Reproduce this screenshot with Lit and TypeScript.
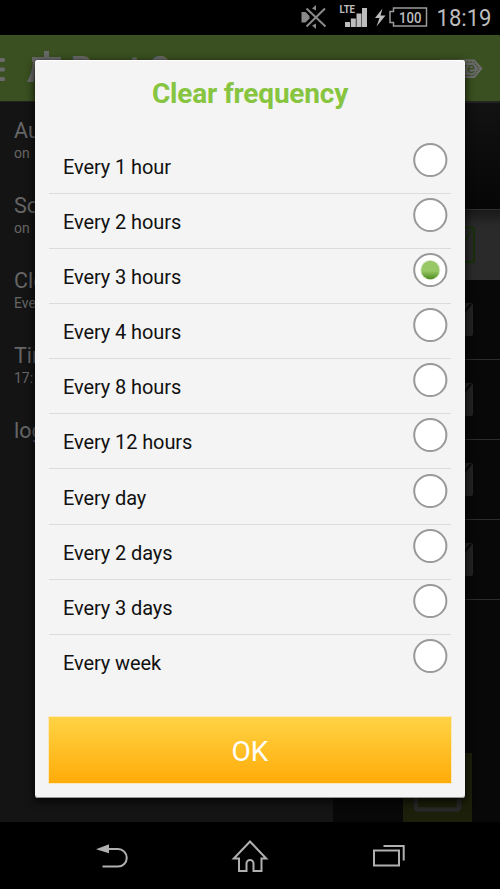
import { LitElement, html, css, svg } from "lit";
import { customElement, property } from "lit/decorators.js";

@customElement("status-bar")
class StatusBar extends LitElement {
  static styles = css`
    :host { display: block; height: 35px; background: #000; }
    svg { display: block; }
    text { font-family: Roboto, sans-serif; fill: #bdbdbd; }
  `;
  render() {
    return html`<svg width="500" height="35" viewBox="0 0 500 35">
      <g fill="#8a8a8a" stroke="none">
        <path d="M301.5 12h4l4 4v2.500l-4 4h-4z" />
        <path d="M312 8.500l4-3.500v5.500zM312 25.500l4 3.500v-5.500z" />
      </g>
      <path d="M306.500 8.500L325.500 26.500M325 8.500L306.500 26.500" stroke="#8a8a8a" stroke-width="2" fill="none" />
      <text x="339.500" y="12.800" font-size="10.500" font-weight="700" textLength="15.500" lengthAdjust="spacingAndGlyphs">LTE</text>
      <path fill="#bdbdbd" d="M345 22h5v5h-5zM350.800 18.500h5V27h-5zM356.500 13.500h5V27h-5zM362 8h5v19h-5z" />
      <path fill="#bdbdbd" d="M382.500 8.500L375 18h4.500L376.500 26.500L385.500 15.500h-5z" />
      <path fill="none" stroke="#9a9a9a" stroke-width="1.500" d="M393.500 8h33v18h-33v-3.500h-3.500v-11h3.500z" />
      <text x="399" y="22.800" font-size="15.500" font-weight="500" textLength="22.500" lengthAdjust="spacingAndGlyphs">100</text>
      <text x="436.500" y="26" font-size="23.500" textLength="55" lengthAdjust="spacingAndGlyphs">18:19</text>
    </svg>`;
  }
}

@customElement("action-bar")
class ActionBar extends LitElement {
  static styles = css`
    :host { display: block; height: 66px; background: #3a5020; }
    svg { display: block; }
    text { font-family: Roboto, sans-serif; }
  `;
  render() {
    return html`<svg width="500" height="66" viewBox="0 35 500 66">
      <g fill="#696969">
        <rect x="-3" y="58" width="8" height="4" rx="1.500" />
        <rect x="-3" y="67.500" width="8" height="4" rx="1.500" />
        <rect x="-3" y="77" width="8" height="4" rx="1.500" />
        <path d="M44 51h5v6h12v5H35q0 14-1 20h-7q5-9 6-20h-1v-5h12z" />
        <text x="71" y="80" font-size="33" font-weight="700">Root C</text>
      </g>
      <path d="M440 60h34.500l7.500 8.500l-7.500 9H440z" fill="#696969" stroke="#707070" />
      <path d="M440 62h33.500l5.500 6.500l-5.500 7H440z" fill="none" stroke="#3a5020" stroke-dasharray="2 1" />
      <text x="475" y="73" font-size="15" fill="#3a5020" text-anchor="end">re</text>
    </svg>`;
  }
}

@customElement("settings-drawer")
class SettingsDrawer extends LitElement {
  static styles = css`
    :host { display: block; width: 333px; box-sizing: border-box; padding: 17px 0 0 14px; background: #141414; color: #666; font-family: Roboto, sans-serif; overflow: hidden; border-top: 1px solid #222; }
    .entry { height: 75px; }
    .name { font-size: 21.500px; line-height: 24px; }
    .value { font-size: 14px; line-height: 18px; padding-top: 1px; }
  `;
  items = [["Au", "on"], ["So", "on"], ["Cle", "Eve"], ["Tim", "17:"], ["log", ""]];
  render() {
    return this.items.map(([n, v]) => html`<div class="entry"><div class="name">${n}</div><div class="value">${v}</div></div>`);
  }
}

@customElement("task-panel")
class TaskPanel extends LitElement {
  static styles = css`
    :host { display: flex; flex-direction: column; flex: 1; background: #080808; }
    .summary { height: 108px; box-sizing: border-box; border-top: 2px solid #242424; background: linear-gradient(#121212, #060606); }
    .row { height: 80px; box-sizing: border-box; display: flex; align-items: center; justify-content: flex-end; padding: 0 27px 0 0; border-bottom: 1px solid #2c2c2c; }
    .row.active { height: 71px; border: 0; border-top: 1px solid #303030; background: linear-gradient(#191919, #2a2a2a 16px); padding-right: 24px; }
    .foot { flex: 1; display: flex; align-items: flex-end; justify-content: flex-end; padding-right: 28px; }
    .action { width: 69px; height: 69px; background: #1c1f0a; display: block; }
    .box { display: block; }
  `;
  box(active: boolean) {
    return active
      ? html`<svg class="box" width="36" height="38" viewBox="0 0 36 38"><rect x="1.500" y="1.500" width="32.500" height="34.500" rx="2" fill="#292929" stroke="#18300a" stroke-width="2"/><path d="M12 19l8 5L31 5" fill="none" stroke="#18300a" stroke-width="1.500"/></svg>`
      : html`<svg class="box" width="33" height="33" viewBox="0 0 33 33"><rect width="33" height="33" rx="2" fill="#232323"/><path d="M10 14l6 5L31 1" fill="none" stroke="#080808" stroke-width="2"/></svg>`;
  }
  render() {
    return html`<div class="summary"></div>
      <div class="row active">${this.box(true)}</div>
      ${[1, 2, 3, 4].map(() => html`<div class="row">${this.box(false)}</div>`)}
      <div class="foot"><svg class="action" viewBox="0 0 69 69"><rect x="13" y="25" width="43" height="31.500" rx="2" fill="none" stroke="#282828" stroke-width="4.500"/></svg></div>`;
  }
}

@customElement("radio-row")
class RadioRow extends LitElement {
  @property() label = "";
  @property({ type: Boolean }) checked = false;
  static styles = css`
    :host { display: flex; justify-content: space-between; align-items: flex-start; height: 55.100px; box-sizing: border-box; border-bottom: 1px solid #dcdcdc; padding: 3.100px 3px 0 14px; font: 20px/24px Roboto, sans-serif; color: #111; }
    :host(:last-of-type) { border-bottom-color: transparent; }
    .label { padding-top: 13px; letter-spacing: -0.100px; white-space: nowrap; }
    svg { display: block; }
  `;
  render() {
    return html`<span class="label">${this.label}</span>
      <svg width="36" height="36" viewBox="0 0 36 36">
        <defs><linearGradient id="dot" x2="0" y2="1"><stop offset="0" stop-color="#98c865"/><stop offset=".55" stop-color="#98c865"/><stop offset="1" stop-color="#4d8a20"/></linearGradient></defs>
        <circle cx="18.300" cy="18" r="16.100" fill="#fff" stroke="#999" stroke-width="2"/>
        ${this.checked ? svg`<circle cx="18.300" cy="18" r="10.200" fill="#e3eed8"/><circle cx="18.300" cy="18" r="9.200" fill="url(#dot)"/>` : ""}
      </svg>`;
  }
}

@customElement("frequency-dialog")
class FrequencyDialog extends LitElement {
  static styles = css`
    :host { display: flex; flex-direction: column; box-sizing: border-box; width: 430px; height: 737.500px; padding: 0 14px 14.500px; background: #f4f4f4; border-radius: 3px; box-shadow: 0 0 1px rgba(0,0,0,.6), 0 3px 9px 1px rgba(0,0,0,.7), inset 0 1px #fff, inset 0 -1px #999; font-family: Roboto, sans-serif; }
    .title { height: 78.900px; box-sizing: border-box; padding-top: 17px; margin: 0; text-align: center; color: #87c540; font-size: 28px; line-height: 34px; font-weight: 700; white-space: nowrap; letter-spacing: -0.200px; }
    .list { flex: 1; }
    .ok { display: block; height: 66px; border: 0; padding: 2px 0 0; color: #fff; font: 28px Roboto, sans-serif; background: linear-gradient(#ffd345, #ffac08); box-shadow: 0 0 0 1px #fbe7be; }
  `;
  options = ["Every 1 hour", "Every 2 hours", "Every 3 hours", "Every 4 hours", "Every 8 hours", "Every 12 hours", "Every day", "Every 2 days", "Every 3 days", "Every week"];
  render() {
    return html`<h1 class="title">Clear frequency</h1>
      <div class="list">${this.options.map((o, i) => html`<radio-row .label=${o} .checked=${i === 2}></radio-row>`)}</div>
      <button class="ok">OK</button>`;
  }
}

@customElement("nav-bar")
class NavBar extends LitElement {
  static styles = css`
    :host { display: block; height: 67px; background: #000; }
    svg { display: block; }
  `;
  render() {
    return html`<svg width="500" height="67" viewBox="0 822 500 67" fill="none" stroke="#b0b0b0" stroke-width="2">
      <path d="M108 849h10a8.800 8.800 0 0 1 0 17.600H102.500"/>
      <path d="M96 849.200l13-5v9z" fill="#b0b0b0" stroke="none"/>
      <path d="M250 841.500L233.800 858.500H239V871H246.500V863.500a3.500 3.500 0 0 1 7 0V871H261.500V858.500H266.200Z"/>
      <rect x="374" y="850.500" width="25" height="15"/>
      <path d="M383.500 846H403.700V860.500"/>
    </svg>`;
  }
}

@customElement("app-root")
class AppRoot extends LitElement {
  static styles = css`
    :host { display: flex; flex-direction: column; position: relative; width: 500px; height: 889px; overflow: hidden; background: #000; }
    .content { display: flex; flex: 1; min-height: 0; }
    .overlay { position: absolute; inset: 60px 35px auto; }
  `;
  render() {
    return html`<status-bar></status-bar><action-bar></action-bar>
      <div class="content"><settings-drawer></settings-drawer><task-panel></task-panel></div>
      <nav-bar></nav-bar>
      <div class="overlay"><frequency-dialog></frequency-dialog></div>`;
  }
}
